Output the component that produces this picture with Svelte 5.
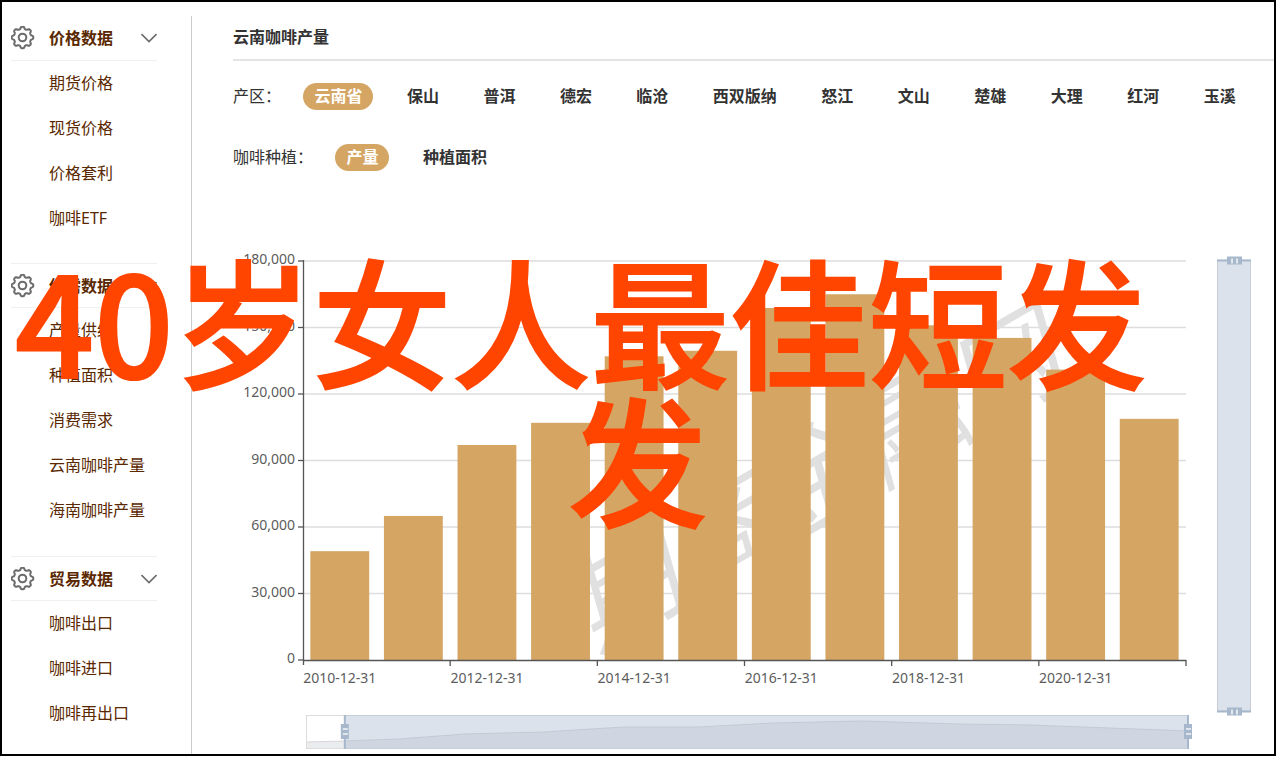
<script lang="ts">
  type Section = { title: string; items: string[] };

  const sections: Section[] = [
    { title: '价格数据', items: ['期货价格', '现货价格', '价格套利', '咖啡ETF'] },
    { title: '供需数据', items: ['产量供给', '种植面积', '消费需求', '云南咖啡产量', '海南咖啡产量'] },
    { title: '贸易数据', items: ['咖啡出口', '咖啡进口', '咖啡再出口'] }
  ];

  const regions = [
    '云南省', '保山', '普洱', '德宏', '临沧', '西双版纳',
    '怒江', '文山', '楚雄', '大理', '红河', '玉溪'
  ];
  const metrics = ['产量', '种植面积'];

  let region = $state('云南省');
  let metric = $state('产量');
  let closed: Record<string, boolean> = $state({});

  // yearly output in tons, 2010 to 2021
  const output = [
    49100, 65000, 97000, 107000, 137000, 139500,
    158800, 165000, 151000, 145300, 131000, 108800
  ];
  const maxValue = 180000;
  const yTicks = [0, 30000, 60000, 90000, 120000, 150000, 180000];

  let chartWidth = $state(1041);

  const grid = { left: 70, top: 73, bottom: 472 };
  const zoomTop = 527;
  const zoomHeight = 33;
  let gridRight = $derived(chartWidth - 88);
  let band = $derived((gridRight - grid.left) / output.length);
  let zoomLeft = $derived(grid.left + 3);
  let zoomRight = $derived(gridRight + 2);
  let zoomStart = $derived(zoomLeft + (zoomRight - zoomLeft) * 0.044);
  let sideLeft = $derived(chartWidth - 57);

  // overview line of the zoom bar: share of the width, height above its floor
  const overview = [
    [0, 6], [0.044, 7], [0.106, 9], [0.18, 14], [0.27, 16], [0.36, 21],
    [0.446, 21], [0.53, 25], [0.63, 27], [0.74, 24], [0.82, 23], [0.91, 20], [1, 17]
  ];
  let overviewLine = $derived(
    overview
      .map(([x, y]) => `${zoomLeft + (zoomRight - zoomLeft) * x},${zoomTop + zoomHeight - y}`)
      .join(' ')
  );

  function yOf(value: number) {
    return grid.bottom - ((grid.bottom - grid.top) * value) / maxValue;
  }

  function gearPath() {
    const points: string[] = [];
    for (let i = 0; i < 128; i++) {
      const a = (i / 128) * Math.PI * 2;
      const r = 9.7 + 1.2 * Math.tanh(1.6 * Math.cos(8 * a));
      points.push(`${(11.5 + r * Math.cos(a)).toFixed(2)} ${(11.5 + r * Math.sin(a)).toFixed(2)}`);
    }
    return `M${points.join('L')}Z`;
  }
  const gear = gearPath();
</script>

<div class="page">
  <nav class="sidebar">
    {#each sections as section}
      <section class="group">
        <button
          class="group-title"
          type="button"
          aria-expanded={!closed[section.title]}
          onclick={() => (closed[section.title] = !closed[section.title])}
        >
          <svg class="gear" width="24" height="24" viewBox="0 0 24 24" aria-hidden="true">
            <path d={gear} />
            <circle cx="11.5" cy="11.5" r="3.8" />
          </svg>
          <span>{section.title}</span>
          <svg class="chevron" width="16" height="10" viewBox="0 0 16 10" aria-hidden="true">
            <path d="M0.5 1L8 8.5L15.5 1" />
          </svg>
        </button>
        {#if !closed[section.title]}
          <ul>
            {#each section.items as item}
              <li><a href="#{item}">{item}</a></li>
            {/each}
          </ul>
        {/if}
      </section>
    {/each}
  </nav>

  <main>
    <h1>云南咖啡产量</h1>

    <div class="filters">
      <div class="filter" role="group" aria-labelledby="region-label">
        <span id="region-label">产区：</span>
        {#each regions as name}
          {' '}<button type="button" class:active={region === name} onclick={() => (region = name)}>{name}</button>
        {/each}
      </div>
      <div class="filter" role="group" aria-labelledby="metric-label">
        <span id="metric-label">咖啡种植：</span>
        {#each metrics as name}
          {' '}<button type="button" class:active={metric === name} onclick={() => (metric = name)}>{name}</button>
        {/each}
      </div>
    </div>

    <div class="chart" bind:clientWidth={chartWidth}>
      <svg width={chartWidth} height="566" role="img" aria-label="云南咖啡产量">
        {#each yTicks.slice(1) as tick}
          <line class="split" x1={grid.left} x2={gridRight} y1={yOf(tick)} y2={yOf(tick)} />
        {/each}

        <text
          class="watermark"
          text-anchor="middle"
          transform="translate({grid.left + (gridRight - grid.left) * 0.6} 327) rotate(-30)"
        >期商金融网</text>

        {#each output as value, i}
          <rect
            class="bar"
            x={grid.left + band * (i + 0.1)}
            y={yOf(value)}
            width={band * 0.8}
            height={grid.bottom - yOf(value)}
          />
        {/each}

        <g class="axis">
          <line x1={grid.left + 0.5} x2={grid.left + 0.5} y1={grid.top - 1} y2={grid.bottom + 5} />
          <line x1={grid.left} x2={gridRight} y1={grid.bottom + 0.5} y2={grid.bottom + 0.5} />
          {#each yTicks as tick}
            <line x1={grid.left - 5} x2={grid.left} y1={yOf(tick)} y2={yOf(tick)} />
            <text x={grid.left - 8} y={yOf(tick) + 3} text-anchor="end">{tick.toLocaleString('en-US')}</text>
          {/each}
          {#each output as _, i}
            {#if i % 2 === 0}
              <line
                x1={grid.left + band * (i + 2)}
                x2={grid.left + band * (i + 2)}
                y1={grid.bottom}
                y2={grid.bottom + 6}
              />
              <text x={grid.left + band * (i + 0.5)} y={grid.bottom + 23} text-anchor="middle">{2010 + i}-12-31</text>
            {/if}
          {/each}
        </g>

        <g class="zoom">
          <polygon
            class="shadow"
            points="{zoomLeft},{zoomTop + zoomHeight} {overviewLine} {zoomRight},{zoomTop + zoomHeight}"
          />
          <polyline class="shadow-line" points={overviewLine} />
          <rect
            class="frame"
            x={zoomLeft + 0.5}
            y={zoomTop + 0.5}
            width={zoomRight - zoomLeft}
            height={zoomHeight}
          />
          <rect class="range" x={zoomStart} y={zoomTop} width={zoomRight - zoomStart} height={zoomHeight + 1} />
          {#each [zoomStart, zoomRight] as x}
            <line class="edge" x1={x} x2={x} y1={zoomTop} y2={zoomTop + zoomHeight + 1} />
            <rect class="handle" x={x - 4} y={zoomTop + 9} width="8" height="15" />
            <path class="grip" d="M{x - 2} {zoomTop + 14}h5M{x - 2} {zoomTop + 19}h5" />
          {/each}
        </g>

        <g class="zoom">
          <rect class="frame" x={sideLeft + 0.5} y="72" width="33" height="451" />
          <rect class="range" x={sideLeft} y="72" width="34" height="451" />
          {#each [72.5, 523.5] as y}
            <line class="edge" x1={sideLeft} x2={sideLeft + 34} y1={y} y2={y} />
            <rect class="handle" x={sideLeft + 10} y={y - 4} width="15" height="8" />
            <path class="grip" d="M{sideLeft + 15} {y - 2}v5M{sideLeft + 20} {y - 2}v5" />
          {/each}
        </g>
      </svg>
    </div>
  </main>

  <p class="headline">40岁女人最佳短发发</p>
</div>

<style>
  :global(body) {
    background: #fff;
  }

  .page {
    position: relative;
    display: flex;
    box-sizing: border-box;
    margin: 0 1px 1px 0;
    padding-top: 14px;
    border: 2px solid #000;
    overflow: hidden;
    font-family: "Noto Sans", "Noto Sans CJK SC", sans-serif;
    font-size: 16px;
    color: #333;
  }

  .sidebar {
    box-sizing: border-box;
    flex: 0 0 190px;
    padding: 0 34px 0 9px;
    border-right: 1px solid #ccc;
  }

  .group {
    margin-bottom: 23px;
  }

  .group:first-child {
    margin-bottom: 22px;
  }

  .group:last-child {
    margin-bottom: 0;
  }

  .group-title {
    display: flex;
    align-items: center;
    box-sizing: border-box;
    width: 100%;
    height: 45px;
    padding: 0;
    border: 0;
    border-top: 1px solid #f0f0f0;
    border-bottom: 1px solid #f0f0f0;
    background: none;
    font: inherit;
    font-weight: 700;
    color: #5a2800;
    cursor: pointer;
  }

  .group:first-child .group-title {
    border-top: 0;
  }

  .group-title span {
    flex: 1;
    margin-left: 14px;
    line-height: 22px;
    text-align: left;
  }

  .gear,
  .chevron {
    fill: none;
    stroke: #6b6b6b;
    stroke-width: 1.6;
  }

  .gear {
    stroke-width: 2;
  }

  ul {
    margin: 0;
    padding: 0;
    list-style: none;
  }

  li a {
    display: block;
    padding-left: 38px;
    line-height: 45px;
    color: #5a2800;
    text-decoration: none;
    white-space: nowrap;
  }

  main {
    flex: 1;
    min-width: 0;
    padding-left: 41px;
  }

  h1 {
    margin: 0;
    border-bottom: 2px solid #e4e4e4;
    font-size: 16px;
    font-weight: 700;
    line-height: 43px;
  }

  .filters {
    padding-top: 5px;
    font-family: "Liberation Sans", "Noto Sans CJK SC", sans-serif;
  }

  .filter {
    height: 61px;
    line-height: 61px;
    white-space: nowrap;
  }

  .filter span {
    margin-right: 9px;
  }

  .filter button {
    height: 27px;
    margin: 0 9px;
    padding: 0 11px;
    border: 0;
    border-radius: 14px;
    background: none;
    font: inherit;
    font-weight: 700;
    line-height: 27px;
    color: #333;
    cursor: pointer;
  }

  .filter button.active {
    background: #d5a564;
    color: #fff;
  }

  .chart {
    overflow: hidden;
  }

  .chart svg {
    display: block;
  }

  .split {
    stroke: #ddd;
    stroke-width: 1.5;
  }

  .watermark {
    fill: #e0e0e0;
    font-family: "Noto Sans CJK SC", sans-serif;
    font-size: 110px;
    font-style: italic;
  }

  .bar {
    fill: #d5a564;
  }

  .axis line {
    stroke: #555;
    stroke-width: 1.3;
  }

  .axis text {
    fill: #5c5c5c;
    font-size: 14px;
  }

  .frame {
    fill: none;
    stroke: #ddd;
  }

  .shadow {
    fill: #ebecee;
  }

  .shadow-line {
    fill: none;
    stroke: #d5d7db;
  }

  .range {
    fill: #a7b7cc;
    fill-opacity: 0.4;
  }

  .edge {
    stroke: #a7b7cc;
    stroke-width: 2;
  }

  .handle {
    fill: #a7b7cc;
  }

  .grip {
    fill: none;
    stroke: #f2f4f7;
    stroke-width: 1.6;
  }

  .headline {
    position: absolute;
    top: 247px;
    left: 0;
    right: 0;
    margin: 0;
    padding: 0 13px;
    font-family: "Noto Sans CJK SC", sans-serif;
    font-size: 139px;
    font-weight: 500;
    line-height: 138px;
    text-align: left;
    text-align-last: center;
    word-break: break-all;
    color: #ff4500;
    -webkit-text-stroke: 2px #ff4500;
    pointer-events: none;
  }
</style>
